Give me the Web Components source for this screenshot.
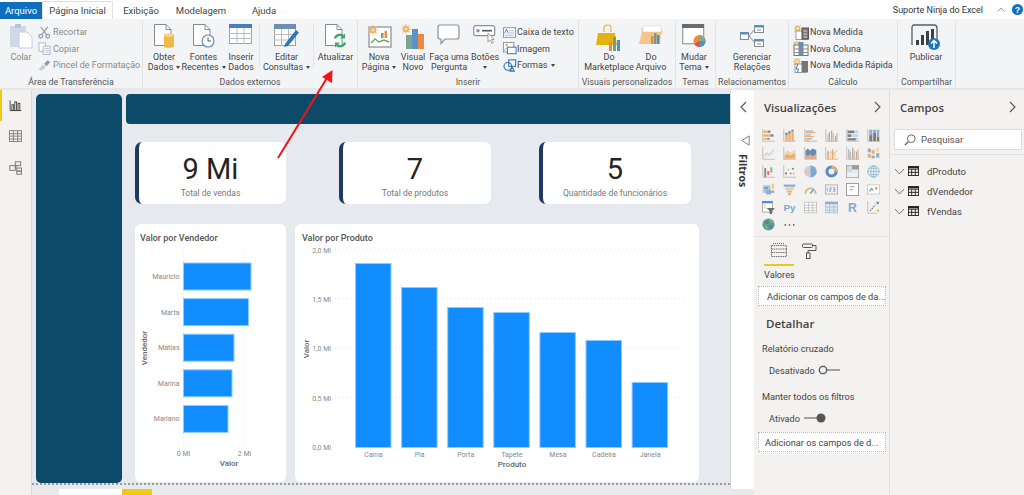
<!DOCTYPE html>
<html>
<head>
<meta charset="utf-8">
<style>
  html, body { margin: 0; height: 495px; overflow: hidden; background: #fff; font-family: Roboto, "Liberation Sans", sans-serif; }
</style>
</head>
<body>
<pbi-app></pbi-app>

<script>
// icon strings, keyed by name
const doc = 'M1.5 .5H13L18 5.5V21.5H1.5Z';
const fold = '<path d="M13 .5V5.5H18" fill="none" stroke="#8a8a8a"/>';
const sun = (x, y) => `<g transform="translate(${x} ${y})" stroke="#f0c48a" stroke-width="1.2"><path d="M-5 0H5M0-5V5M-3.5-3.5L3.5 3.5M-3.5 3.5L3.5-3.5"/><circle r="2.4" fill="#f5d9a8" stroke="#e3a860"/></g>`;
const ICONS = {
  colar: `<svg width="23" height="25" viewBox="0 0 23 25"><rect x="0" y="2" width="16" height="21" fill="#cfd9e8"/><rect x="5" y="0" width="6" height="4" fill="#b9c5d6"/><path d="M9 8H17L22 13V24H9Z" fill="#fff" stroke="#bcd0e6"/></svg>`,
  recortar: `<svg width="13" height="13" viewBox="0 0 14 14" fill="none" stroke="#8d9db0" stroke-width="1.3"><circle cx="3" cy="11" r="2"/><circle cx="10.5" cy="11" r="2"/><path d="M4 9.5L10.5 1M9.5 9.5L3 1"/></svg>`,
  copiar: `<svg width="13" height="13" viewBox="0 0 14 14" fill="#fff" stroke="#aab6c4"><rect x="1" y="1" width="7" height="9"/><rect x="5.5" y="4.5" width="7.5" height="9"/><path d="M7 7H12M7 9H12M7 11H12" stroke-width=".8"/></svg>`,
  pincel: `<svg width="13" height="12" viewBox="0 0 15 13"><path d="M1 11L6 6L9 9L5 12.5H2Z" fill="#c5ccd6"/><path d="M7 5L11 1L14 3L10 8Z" fill="#8a97a8"/></svg>`,
  obter: `<svg width="22" height="25" viewBox="0 0 22 25"><path d="${doc}" fill="#fff" stroke="#8a8a8a"/>${fold}<path d="M11 11V23C11 24 21 24 21 23V11Z" fill="#eeb84a"/><ellipse cx="16" cy="11" rx="5" ry="1.8" fill="#f5d58e"/></svg>`,
  fontes: `<svg width="24" height="25" viewBox="0 0 24 25"><path d="${doc}" fill="#fff" stroke="#8a8a8a"/>${fold}<circle cx="16" cy="17" r="6" fill="#fff" stroke="#5b8fc4" stroke-width="1.2"/><path d="M16 13.5V17H19" fill="none" stroke="#555"/></svg>`,
  tabela: `<svg width="24" height="21" viewBox="0 0 24 21"><rect x=".5" y=".5" width="22" height="19" fill="#fff" stroke="#9aa0a6"/><rect x="0" y="0" width="23" height="4" fill="#4a7ebb"/><path d="M8 4V20M15 4V20M0 9.5H23M0 14.5H23" stroke="#b8bcc0"/></svg>`,
  editar: `<svg width="26" height="24" viewBox="0 0 26 24"><rect x=".5" y="1.5" width="21" height="20" fill="#fff" stroke="#9aa0a6"/><rect x="0" y="0" width="22" height="5" fill="#6d8fb2"/><path d="M7.5 5V22M14.5 5V22M0 10.5H22M0 16H22" stroke="#b8bcc0"/><path d="M11 20L22 6L25 8.5L14 22L10 23Z" fill="#2f75bb"/></svg>`,
  atualizar: `<svg width="24" height="25" viewBox="0 0 24 25"><path d="${doc}" fill="#fff" stroke="#8a8a8a"/>${fold}<path d="M11 14.5A5 5 0 0 1 20 13M21 18.5A5 5 0 0 1 12 20" fill="none" stroke="#3fa56e" stroke-width="2.4"/><path d="M21 9.5V14.5H16ZM11 23.5V18.5H16Z" fill="#3fa56e"/></svg>`,
  pagina: `<svg width="25" height="24" viewBox="0 0 25 24"><rect x="2" y="3" width="22" height="20" fill="#fff" stroke="#9a9a9a" stroke-width="1.4"/><rect x="14" y="9" width="2.5" height="5" fill="#6ea36f"/><rect x="17.5" y="7" width="2.5" height="7" fill="#e8923f"/><path d="M4 19L8 15L12 18L17 16L22 18" fill="none" stroke="#6ea36f" stroke-width="1.4"/>${sun(6, 6)}</svg>`,
  visual: `<svg width="25" height="26" viewBox="0 0 25 26"><rect x="5" y="11" width="6" height="14" fill="#7ca58f"/><rect x="11" y="5" width="6" height="20" fill="#5d92c6"/><rect x="17" y="10" width="6" height="15" fill="#ea8a3e"/>${sun(5, 5)}</svg>`,
  pergunta: `<svg width="24" height="21" viewBox="0 0 24 21"><path d="M3 1H20Q22 1 22 3V13Q22 15 20 15H8L4 19.5V15H3Q1 15 1 13V3Q1 1 3 1Z" fill="#fff" stroke="#8e8e8e" stroke-width="1.2"/></svg>`,
  botoes: `<svg width="24" height="20" viewBox="0 0 24 20"><rect x=".7" y="1.7" width="21" height="10" rx="2" fill="#fff" stroke="#8e8e8e" stroke-width="1.2"/><circle cx="5" cy="6.7" r="1.7" fill="#5b9bd5"/><path d="M9 6.7H19" stroke="#555" stroke-width="1.6"/><path d="M15 9L15 18L17 16L19 19.5L20.5 18.5L18.5 15.5H21Z" fill="#fff" stroke="#888" stroke-width=".8"/></svg>`,
  caixa: `<svg width="13" height="11" viewBox="0 0 15 12"><rect x=".5" y=".5" width="14" height="11" fill="#fff" stroke="#7a8a9a"/><path d="M2 7L4 2L6 7" fill="none" stroke="#3d7cc0"/><path d="M7 4H13M7 6.5H13M2 9H13" stroke="#a5b5c5"/></svg>`,
  imagem: `<svg width="14" height="13" viewBox="0 0 16 15"><rect x=".5" y=".5" width="12" height="11" fill="#fff" stroke="#8a8a8a"/><circle cx="4" cy="3.5" r="1.4" fill="#e8a35a"/><rect x="5" y="6" width="10" height="7.5" fill="#fff" stroke="#3d7cc0" stroke-width="1.2"/><path d="M1 10L4 7L6 9" fill="none" stroke="#5b9bd5"/></svg>`,
  formas: `<svg width="14" height="13" viewBox="0 0 16 15" fill="none" stroke="#2f6fb0" stroke-width="1.2"><circle cx="5.5" cy="8.5" r="4.5"/><rect x="6.5" y="1" width="8" height="7.5"/><path d="M8 14L10.5 9.5L13 14Z"/></svg>`,
  marketplace: `<svg width="26" height="28" viewBox="0 0 26 28"><path d="M8 8V4Q8 1 12 1Q15 1 15 4V8" fill="none" stroke="#e0b93a" stroke-width="1.2"/><path d="M2 8H19L21 20H0Z" fill="#e3b40e" transform="translate(0 1)"/><rect x="13" y="18" width="3" height="9" fill="#e98a3c"/><rect x="17" y="13" width="3" height="14" fill="#6fa08a"/><rect x="21" y="16" width="3" height="11" fill="#4f8fca"/></svg>`,
  arquivo: `<svg width="24" height="24" viewBox="0 0 24 24"><path d="M3 4H9L11 6H23V10H3Z" fill="#f4d6a2" stroke="#e9c181" stroke-width=".6"/><path d="M4 2H22V8H4Z" fill="#fff" stroke="#d8d8d8" stroke-width=".6"/><path d="M0 20L3 8H22L21 20Z" fill="#f2c68a"/><rect x="12" y="12" width="2.5" height="8" fill="#e98a3c"/><rect x="15" y="9" width="2.5" height="11" fill="#6fa08a"/><rect x="18" y="11" width="2.5" height="9" fill="#4f8fca"/></svg>`,
  tema: `<svg width="24" height="25" viewBox="0 0 24 25"><rect x=".7" y=".7" width="21" height="19" fill="#fff" stroke="#9a9a9a" stroke-width="1.2"/><rect x="0" y="0" width="22" height="4" fill="#6b6b6b"/><circle cx="17.5" cy="17" r="6" fill="#e98a3c"/><path d="M17.5 17V11A6 6 0 0 1 23.5 17Z" fill="#7fae8c"/><path d="M17.5 17H23.5A6 6 0 0 1 17.5 23Z" fill="#4f8fca"/><path d="M17.5 17V23A6 6 0 0 1 12.5 20Z" fill="#d94f3d"/></svg>`,
  relacoes: `<svg width="24" height="24" viewBox="0 0 24 24"><path d="M9 12L15 5M9 12L15 19" stroke="#8a8a8a" fill="none"/><rect x=".5" y="8.5" width="8" height="7" fill="#fff" stroke="#8a8a8a"/><rect x="0" y="8" width="9" height="2.5" fill="#5b8fc4"/><rect x="14.5" y="1.5" width="9" height="7" fill="#fff" stroke="#8a8a8a"/><rect x="14" y="1" width="10" height="2.5" fill="#5b8fc4"/><rect x="14.5" y="15.5" width="9" height="7" fill="#fff" stroke="#8a8a8a"/><rect x="14" y="15" width="10" height="2.5" fill="#5b8fc4"/><path d="M17 6H21M17 20H21" stroke="#8a8a8a"/></svg>`,
  medida: `<svg width="15" height="15" viewBox="0 0 15 15">${sun(3.5, 3.5).replace('stroke-width="1.2"', 'stroke-width=".9"')}<rect x="2" y="6" width="12" height="8.5" fill="#fff" stroke="#999"/><rect x="8" y="3" width="6.5" height="11" fill="#777" stroke="#555"/><path d="M9.5 6H13M9.5 9H13M9.5 12H13" stroke="#ddd"/></svg>`,
  coluna: `<svg width="16" height="15" viewBox="0 0 16 15">${sun(3.5, 3.5).replace('stroke-width="1.2"', 'stroke-width=".9"')}<rect x="1" y="4" width="14" height="10.5" fill="#fff" stroke="#777"/><rect x="5.5" y="1" width="5" height="13.5" fill="#6a8fb5"/><path d="M1 8H15M1 11.5H15" stroke="#888"/></svg>`,
  rapida: `<svg width="16" height="15" viewBox="0 0 16 15">${sun(4, 3.5).replace('stroke-width="1.2"', 'stroke-width=".9"')}<rect x="2" y="6" width="12" height="8.5" fill="#fff" stroke="#999"/><rect x="8.5" y="3" width="6.5" height="11" fill="#777"/><path d="M5 6L3 11H5.5L4.5 14.5" fill="none" stroke="#3d7cc0"/></svg>`,
  publicar: `<svg width="32" height="28" viewBox="0 0 32 28"><path d="M4 1H24Q27 1 27 4V16M2 21V4Q2 1 4 1" fill="none" stroke="#5c5c5c" stroke-width="1.3"/><rect x="6" y="16" width="3" height="5" fill="#3f3f3f"/><rect x="11" y="11" width="3" height="10" fill="#3f3f3f"/><rect x="16" y="7" width="3" height="14" fill="#3f3f3f"/><rect x="21" y="5" width="3" height="12" fill="#3f3f3f"/><circle cx="24" cy="20" r="6" fill="#1f75c4"/><path d="M24 24V17M21 19.5L24 16.5L27 19.5" fill="none" stroke="#fff" stroke-width="1.5"/></svg>`,
  relatorio: `<svg width="13" height="13" viewBox="0 0 18 18" fill="none" stroke="#444" stroke-width="1.3"><path d="M1.5 2V16H17" /><rect x="4" y="8" width="2.5" height="8"/><rect x="8" y="4" width="2.5" height="12"/><rect x="12.5" y="6" width="2.5" height="10"/></svg>`,
  dados: `<svg width="13" height="13" viewBox="0 0 18 17" fill="#fff" stroke="#777" stroke-width="1.2"><rect x=".5" y=".5" width="17" height="15" fill="#f3f2f1"/><path d="M.5 4.5H17.5M.5 8H17.5M.5 12H17.5M6 .5V15.5M12 .5V15.5" fill="none"/></svg>`,
  modelo: `<svg width="14" height="14" viewBox="0 0 18 18" fill="none" stroke="#777" stroke-width="1.2"><rect x="8" y="1" width="7" height="5"/><rect x="1" y="6" width="7" height="6"/><rect x="10" y="9" width="6" height="4"/><rect x="10" y="13" width="6" height="4"/><path d="M8 9L10 5M8 9H10"/></svg>`,
  campos: `<svg width="16" height="15" viewBox="0 0 16 15" fill="none" stroke="#6a6a6a" stroke-dasharray="1.4 .8"><rect x=".5" y="2.5" width="15" height="11"/><path d="M.5 6H15.5M.5 9.5H15.5"/><path d="M2 .5H14" stroke-dasharray="1 1"/></svg>`,
  rolo: `<svg width="15" height="16" viewBox="0 0 15 16" fill="#f3f2f1" stroke="#555"><rect x=".5" y="1" width="10" height="3.5" rx="1"/><path d="M10.5 2.5H14V7.5H6V10" fill="none"/><rect x="4.5" y="10" width="3.5" height="5.5"/></svg>`,
  funil: `<svg width="10" height="11" viewBox="0 0 12 13" fill="none" stroke="#666"><path d="M11 1V12L3 7Q1 6.5 3 6Z"/></svg>`,
  lupa: `<svg width="12" height="12" viewBox="0 0 14 14" fill="none" stroke="#555"><circle cx="8.5" cy="5.5" r="4.5"/><path d="M5 9L1 13" stroke-width="1.4"/></svg>`,
  tabelinha: `<svg width="11" height="10" viewBox="0 0 12 11" fill="none" stroke="#222"><rect x=".5" y=".5" width="11" height="10"/><path d="M.5 3.5H11.5M.5 7H11.5M4 3.5V10.5M8 3.5V10.5"/><path d="M0 1.5H12" stroke-width="2"/></svg>`,
  esq: `<svg width="7" height="12" viewBox="0 0 7 12" fill="none" stroke="#555" stroke-width="1.1"><path d="M6 1L1 6L6 11"/></svg>`,
  dir: `<svg width="7" height="12" viewBox="0 0 7 12" fill="none" stroke="#555" stroke-width="1.1"><path d="M1 1L6 6L1 11"/></svg>`,
  baixo: `<svg width="11" height="7" viewBox="0 0 11 7" fill="none" stroke="#777"><path d="M1 1L5.5 6L10 1"/></svg>`
};

// viz pane icons, all drawn on 17x17
const O = '#e9a35c', B = '#7fa3c9', G = '#6b6b6b', L = '#b9cfe5', P = '#f3d3ab', A = '#a8a8a8';
const r = (x, y, w, h, c) => `<rect x="${x}" y="${y}" width="${w}" height="${h}" fill="${c}"/>`;
const axis = `<path d="M1 0V16H17" fill="none" stroke="${A}"/>`;
const VIZ = [
  axis + r(2,2,6,3,O)+r(8,2,3,3,G)+r(2,7,9,3,O)+r(11,7,4,3,G)+r(2,12,5,2,O)+r(7,12,3,2,G),
  axis + r(3,8,3,8,O)+r(3,5,3,3,G)+r(7,6,3,10,O)+r(7,3,3,3,G)+r(11,3,3,13,O)+r(11,1,3,2,G),
  axis + r(2,2,10,1.5,B)+r(2,4,13,1.5,O)+r(2,7,7,1.5,B)+r(2,9,11,1.5,O)+r(2,12,9,1.5,B)+r(2,14,5,1.5,O),
  axis + r(3,7,1.5,9,O)+r(5,4,1.5,12,B)+r(8,2,1.5,14,B)+r(10,6,1.5,10,O)+r(13,9,1.5,7,B)+r(15,5,1.5,11,O),
  axis + r(2,2,9,3.5,G)+r(11,2,5,3.5,L)+r(2,7,5,3.5,G)+r(7,7,9,3.5,L)+r(2,12,11,3,G)+r(13,12,3,3,L),
  axis + r(3,1,4,7,B)+r(3,8,4,8,G)+r(8,1,4,4,B)+r(8,5,4,11,G)+r(13,1,3,9,B)+r(13,10,3,6,G),
  axis + `<path d="M2 12L6 8L9 10L16 3" fill="none" stroke="${B}"/><path d="M2 14L6 11L10 12L16 7" fill="none" stroke="${P}"/>`,
  axis + `<path d="M2 8L6 4L10 7L16 3V15H2Z" fill="${P}"/><path d="M2 11L6 9L10 11L16 8V15H2Z" fill="${O}"/>`,
  axis + `<path d="M2 5L5 2L8 5L11 2L16 4V15H2Z" fill="#4e78a5"/><path d="M2 9L5 12L8 9L11 12L16 9V15H2Z" fill="${O}"/>`,
  axis + r(3,5,2,11,O)+r(6,8,2,8,P)+r(9,3,2,13,O)+r(12,7,2,9,P)+`<path d="M2 10L7 6L11 9L16 4" fill="none" stroke="#c96" />`,
  axis + r(3,3,1.5,13,B)+r(5,6,1.5,10,O)+r(8,1,1.5,15,B)+r(10,4,1.5,12,O)+r(13,6,1.5,10,B)+r(15,3,1.5,13,O),
  r(1,2,4,5,B)+r(1,9,4,5,O)+r(6,4,4,5,O)+r(6,11,4,4,B)+r(12,1,4,5,P)+r(12,8,4,6,B),
  axis + r(3,4,2.5,12,'#7a7a7a')+r(7,8,2.5,5,'#d9534f')+r(11,3,2.5,7,'#7ca58f'),
  axis + `<circle cx="4" cy="11" r="1.4" fill="#4e78a5"/><circle cx="7" cy="6" r="1.2" fill="${O}"/><circle cx="10" cy="11" r="1.2" fill="#d9534f"/><circle cx="13" cy="5" r="1.3" fill="#4e78a5"/><circle cx="14" cy="11" r="1.1" fill="${O}"/>`,
  `<circle cx="8.5" cy="8.5" r="8" fill="${L}"/><path d="M8.5 .5A8 8 0 0 1 8.5 16.5Z" fill="#6f9ccb"/><path d="M8.5 8.5L1 6A8 8 0 0 0 3 14Z" fill="#f0b9a0"/>`,
  `<circle cx="8.5" cy="8.5" r="6" fill="none" stroke="#3f7cbf" stroke-width="4"/><path d="M8.5 2.5A6 6 0 0 1 14.5 8.5" fill="none" stroke="${O}" stroke-width="4"/>`,
  `<rect x=".5" y=".5" width="16" height="16" fill="#fff" stroke="#777"/>` + r(1,1,7,9,'#c9d5e0')+r(8,1,8,5,'#8a8a8a')+r(8,7,8,4,'#dfe6ee')+r(1,11,15,5,'#eceff2'),
  `<circle cx="8.5" cy="8.5" r="7.5" fill="#e5f1f1" stroke="#6fa3c7"/><path d="M1 8.5H16M8.5 1V16M3 4.5H14M3 12.5H14" stroke="#6fa3c7" stroke-width=".8"/><ellipse cx="8.5" cy="8.5" rx="3.5" ry="7.5" fill="none" stroke="#6fa3c7" stroke-width=".8"/>`,
  r(1,3,10,10,'#a9bfd6')+r(3,5,5,3,'#6f8fb0')+r(5,9,7,6,B)+r(13,1,2.5,7,'#e9c26a')+r(11,10,5,3,'#7fa3c9'),
  r(1,2,15,3,B)+r(3,6,11,3,'#f0c08a')+r(5,10,7,2.5,O)+r(6.5,13.5,4,2.5,'#d9a060'),
  `<path d="M2 14A6.5 6.5 0 0 1 9 7" fill="none" stroke="#e8b45e" stroke-width="2.6"/><path d="M9 7A6.5 6.5 0 0 1 15 14" fill="none" stroke="#9db7d1" stroke-width="2.6"/><path d="M8 14L12 9" stroke="#3f8f5f" stroke-width="1.6"/>`,
  `<rect x=".5" y="2.5" width="16" height="12" fill="#eef1f4" stroke="#999"/><path d="M3 6V11M6 6H8V8.5H6V11H8M10.5 6H13V11H10.5M10.5 8.5H13" fill="none" stroke="#7a8ea3"/>`,
  `<rect x=".5" y=".5" width="16" height="16" fill="#fff" stroke="#8a8a8a" stroke-width="1.4"/>` + r(5,4,6,1.5,B)+r(5,8,4,1.5,B),
  `<rect x=".5" y="2.5" width="16" height="12" fill="#fff" stroke="#bbb"/><path d="M3 11L6 7L8 10" fill="none" stroke="#4f9a6c" stroke-width="1.4"/><path d="M10 6H14L12 9Z" fill="#d94f3d"/>`,
  `<rect x=".5" y=".5" width="13" height="14" fill="#fff" stroke="#8a8a8a"/>` + r(0,0,14,3,'#3f7cbf')+r(3,5,1.5,1.5,O)+r(3,8,1.5,1.5,O)+`<path d="M6 9H17L13 13V17H10V13Z" fill="#555"/>`,
  `<text x="8.5" y="13.5" font-size="13" font-weight="700" text-anchor="middle" fill="#6f9ccb" font-family="Liberation Sans">Py</text>`,
  `<rect x=".5" y="1.5" width="16" height="14" fill="#fff" stroke="#b2b2b2"/><path d="M.5 5.5H16.5M.5 9H16.5M.5 12.5H16.5M6 1.5V15.5M11.5 1.5V15.5" stroke="#b2b2b2"/>`,
  `<rect x=".5" y="1.5" width="16" height="14" fill="#dfe7ef" stroke="#9fb2c6"/>` + r(0,1,17,3,'#7fa3c9') + `<path d="M.5 8H16.5M.5 12H16.5M6 4V15.5M11.5 4V15.5" stroke="#9fb2c6"/>`,
  `<text x="8.5" y="14.5" font-size="16" font-weight="700" text-anchor="middle" fill="#6f9ccb" font-family="Liberation Sans">R</text>`,
  `<path d="M1 0V16H13" fill="none" stroke="${A}"/><path d="M4 13L11 5" stroke="#555" stroke-dasharray="2 1.3" stroke-width="1.4"/><circle cx="14" cy="2.5" r="1.8" fill="#4a86c5"/><circle cx="14.5" cy="12.5" r="2" fill="#eec15e"/>`,
  `<circle cx="8.5" cy="8.5" r="8" fill="#4f8f7c"/><path d="M3 5L8 3L10 7L6 8ZM9 10L14 8L13 13L9 14Z" fill="#2f6fb0"/><path d="M5 11L7 14M11 3L14 6" stroke="#9ac27a" stroke-width="1.3"/>`,
  `<circle cx="3" cy="9" r="1.1" fill="#444"/><circle cx="8.5" cy="9" r="1.1" fill="#444"/><circle cx="14" cy="9" r="1.1" fill="#444"/>`
];

class RbTabs extends HTMLElement {
  constructor() {
    super();
    this.attachShadow({mode: 'open'});
    this.shadowRoot.innerHTML = `
    <style>
      :host { display: flex; height: 19px; background: #fff; font-size: 9.5px; color: #444; align-items: flex-end; }
      span { display: flex; align-items: center; justify-content: center; height: 17px; }
      .file { width: 42px; background: #106ebe; color: #fff; }
      .on { width: 71px; height: 18px; box-sizing: border-box; background: #fdfdfd; border: 1px solid #e1e1e1; border-bottom: 0; }
      .t1 { width: 56px; } .t2 { width: 64px; } .t3 { width: 62px; }
      .right { margin-left: auto; padding-right: 1px; display: flex; align-items: center; height: 19px; }
      .help { width: 11px; height: 11px; border-radius: 50%; background: #106ebe; color: #fff; font: 700 9px "Liberation Sans", sans-serif; margin-left: 7px; }
      .who { font-size: 9px; color: #333; margin-right: 14px; }
    </style>
    <span class="file">Arquivo</span><span class="on">Página Inicial</span>
    <span class="t1">Exibição</span><span class="t2">Modelagem</span><span class="t3">Ajuda</span>
    <div class="right"><span class="who">Suporte Ninja do Excel</span>
      <svg width="8" height="5" viewBox="0 0 8 5" fill="none" stroke="#999"><path d="M.5 4.5L4 1L7.5 4.5"/></svg>
      <span class="help">?</span></div>`;
  }
}

class RbGroup extends HTMLElement {
  constructor() {
    super();
    this.attachShadow({mode: 'open'});
    this.shadowRoot.innerHTML = `
    <style>
      :host { display: flex; flex-direction: column; box-sizing: border-box; height: 67px; margin-top: 2px; border-right: 1px solid #e1e3e6; }
      .body { display: flex; height: 55px; justify-content: var(--just, flex-start); }
      .label { height: 12px; line-height: 13px; text-align: center; font-size: 8.8px; color: #555; white-space: nowrap; }
    </style>
    <div class="body"><slot></slot></div>
    <div class="label"></div>`;
  }
  connectedCallback() {
    this.shadowRoot.querySelector('.label').textContent = this.getAttribute('label');
  }
}

class RbButton extends HTMLElement {
  constructor() {
    super();
    this.attachShadow({mode: 'open'});
    this.shadowRoot.innerHTML = `
    <style>
      :host { display: flex; flex-direction: column; align-items: center; flex: none; font-size: 9px; line-height: 10px; color: #444; }
      .ic { height: 31px; padding-top: 3px; box-sizing: border-box; display: flex; align-items: flex-start; justify-content: center; }
      .tx { text-align: center; white-space: pre; }
      :host([off]) { color: #888; }
    </style>
    <div class="ic"></div><div class="tx"><slot></slot></div>`;
  }
  connectedCallback() {
    this.shadowRoot.querySelector('.ic').innerHTML = ICONS[this.getAttribute('icon')];
  }
}

class RbSmall extends HTMLElement {
  constructor() {
    super();
    this.attachShadow({mode: 'open'});
    this.shadowRoot.innerHTML = `
    <style>
      :host { display: flex; align-items: center; gap: var(--gap, 3px); height: 16.5px; font-size: 9px; color: #444; white-space: nowrap; }
      :host([off]) { color: #8a8a8a; }
      .ic { display: flex; width: var(--ic, 16px); justify-content: center; }
    </style>
    <div class="ic"></div><slot></slot>`;
  }
  connectedCallback() {
    this.shadowRoot.querySelector('.ic').innerHTML = ICONS[this.getAttribute('icon')];
  }
}

class PbiRibbon extends HTMLElement {
  constructor() {
    super();
    const tri = 'display:inline-block;border:2.5px solid transparent;border-top:3px solid #444;border-bottom:0;';
    const caret = `<i style="${tri}margin-left:3px;vertical-align:1px"></i>`;
    this.attachShadow({mode: 'open'});
    this.shadowRoot.innerHTML = `
    <style>
      :host { display: flex; height: 71px; box-sizing: border-box; background: #f3f4f6; border-bottom: 2px solid #e6e6e6; }
      .col { display: flex; flex-direction: column; padding-top: 3px; }
      .sep { width: 1px; height: 44px; margin-top: 3px; background: #e1e3e6; flex: none; }
    </style>
    <rb-group label="Área de Transferência" style="width:143px">
      <rb-button off icon="colar" style="width:36px;margin-left:3px">Colar</rb-button>
      <div class="col" style="margin-left:-1px;--ic:13px;--gap:2px">
        <rb-small off icon="recortar">Recortar</rb-small>
        <rb-small off icon="copiar">Copiar</rb-small>
        <rb-small off icon="pincel">Pincel de Formatação</rb-small>
      </div>
    </rb-group>
    <rb-group label="Dados externos" style="width:215px">
      <rb-button icon="obter" style="width:40px;margin-left:1px">Obter\nDados${caret}</rb-button>
      <rb-button icon="fontes" style="width:39px">Fontes\nRecentes${caret}</rb-button>
      <rb-button icon="tabela" style="width:36px">Inserir\nDados</rb-button>
      <div class="sep"></div>
      <rb-button icon="editar" style="width:53px">Editar\nConsultas${caret}</rb-button>
      <div class="sep"></div>
      <rb-button icon="atualizar" style="width:43px">Atualizar</rb-button>
    </rb-group>
    <rb-group label="Inserir" style="width:221px">
      <rb-button icon="pagina" style="width:38px;margin-left:2px">Nova\nPágina${caret}</rb-button>
      <rb-button icon="visual" style="width:30px">Visual\nNovo</rb-button>
      <rb-button icon="pergunta" style="width:42px">Faça uma\nPergunta</rb-button>
      <rb-button icon="botoes" style="width:30px">Botões\n<i style="${tri}vertical-align:1px"></i></rb-button>
      <div class="col" style="margin-left:2px;--ic:15px;--gap:0">
        <rb-small icon="caixa">Caixa de texto</rb-small>
        <rb-small icon="imagem">Imagem</rb-small>
        <rb-small icon="formas">Formas${caret}</rb-small>
      </div>
    </rb-group>
    <rb-group label="Visuais personalizados" style="width:97px">
      <rb-button icon="marketplace" style="width:52px;margin-left:4px">Do\nMarketplace</rb-button>
      <rb-button icon="arquivo" style="width:32px">Do\nArquivo</rb-button>
    </rb-group>
    <rb-group label="Temas" style="width:40px">
      <rb-button icon="tema" style="width:36px">Mudar\nTema${caret}</rb-button>
    </rb-group>
    <rb-group label="Relacionamentos" style="width:73px">
      <rb-button icon="relacoes" style="width:72px">Gerenciar\nRelações</rb-button>
    </rb-group>
    <rb-group label="Cálculo" style="width:109px">
      <div class="col" style="margin-left:4px;--gap:1px">
        <rb-small icon="medida">Nova Medida</rb-small>
        <rb-small icon="coluna">Nova Coluna</rb-small>
        <rb-small icon="rapida">Nova Medida Rápida</rb-small>
      </div>
    </rb-group>
    <rb-group label="Compartilhar" style="width:58px">
      <rb-button icon="publicar" style="width:56px">Publicar</rb-button>
    </rb-group>`;
  }
}

class PbiRail extends HTMLElement {
  constructor() {
    super();
    this.attachShadow({mode: 'open'});
    this.shadowRoot.innerHTML = `
    <style>
      :host { display: flex; flex-direction: column; box-sizing: border-box; width: 32px; height: 405px; background: #f3f2f1; border-right: 1px solid #d9d9d9; }
      div { height: 31px; display: flex; align-items: center; justify-content: center; }
      .on { box-shadow: inset 2px 0 0 #f2c811; }
    </style>
    <div class="on">${ICONS.relatorio}</div><div>${ICONS.dados}</div><div>${ICONS.modelo}</div>`;
  }
}

class KpiCard extends HTMLElement {
  constructor() {
    super();
    this.attachShadow({mode: 'open'});
    this.shadowRoot.innerHTML = `
    <style>
      :host { display: flex; flex-direction: column; align-items: center; box-sizing: border-box; height: 62px; padding-right: 4px; background: #fff; border-radius: 7px; border-left: 4px solid #1f3864; overflow: hidden; }
      .v { font-size: 29px; line-height: 35px; margin-top: 10px; color: #252423; }
      .l { font-size: 8.5px; line-height: 12px; color: #777; white-space: nowrap; }
    </style>
    <div class="v"></div><div class="l"></div>`;
  }
  connectedCallback() {
    this.shadowRoot.querySelector('.v').textContent = this.getAttribute('value');
    this.shadowRoot.querySelector('.l').textContent = this.getAttribute('label');
  }
}

// draws the chart from plot numbers given in the card's own pixels
class BarChart extends HTMLElement {
  constructor() {
    super();
    this.attachShadow({mode: 'open'});
    this.shadowRoot.innerHTML = `
    <style>
      :host { display: block; flex: none; height: 258px; background: #fff; border-radius: 6px; overflow: hidden; }
      svg { display: block; }
      .t { font-size: 9px; font-weight: 500; fill: #555; }
      .a { font-size: 8px; font-weight: 500; fill: #666; }
      .k { font-size: 7px; fill: #888; }
      .b { fill: #118dff; stroke: #8fcaff; }
      .g { stroke: #e4e4e4; stroke-dasharray: 1 3; }
    </style>`;
  }
  connectedCallback() {
    const horizontal = this.hasAttribute('horizontal');
    const data = JSON.parse(this.getAttribute('data'));
    const w = this.getBoundingClientRect().width;
    let s = `<svg width="${w}" height="258"><text class="t" x="${horizontal ? 5 : 7}" y="17">${this.getAttribute('title')}</text>`;
    if (horizontal) {
      for (const x of [48.5, 109.5]) s += `<line class="g" x1="${x}" x2="${x}" y1="25" y2="222"/>`;
      data.forEach((d, i) => {
        const y = 39 + i * 35.6;
        s += `<rect class="b" x="48.5" y="${y}" width="${d[1]}" height="27"/>`;
        s += `<text class="k" x="44.5" y="${y + 16}" text-anchor="end">${d[0]}</text>`;
      });
      s += `<text class="k" x="48.5" y="232" text-anchor="middle">0 Mi</text><text class="k" x="109.5" y="232" text-anchor="middle">2 Mi</text>`;
      s += `<text class="a" x="94" y="242" text-anchor="middle">Valor</text>`;
      s += `<text class="a" transform="translate(12 124) rotate(-90)" text-anchor="middle">Vendedor</text>`;
    } else {
      ['2,0 Mi', '1,5 Mi', '1,0 Mi', '0,5 Mi', '0,0 Mi'].forEach((t, i) => {
        const y = 25.5 + i * 49.4;
        s += `<text class="k" x="36" y="${y + 3}" text-anchor="end">${t}</text>`;
        if (i < 4) s += `<line class="g" x1="40" x2="390" y1="${y}" y2="${y}"/>`;
      });
      data.forEach((d, i) => {
        const x = 60.5 + i * 46.1;
        s += `<rect class="b" x="${x}" y="${d[1]}" width="35.5" height="${223.5 - d[1]}"/>`;
        s += `<text class="k" x="${x + 18}" y="233" text-anchor="middle">${d[0]}</text>`;
      });
      s += `<text class="a" x="217" y="243" text-anchor="middle">Produto</text>`;
      s += `<text class="a" transform="translate(14 125) rotate(-90)" text-anchor="middle">Valor</text>`;
    }
    this.shadowRoot.innerHTML += s + '</svg>';
  }
}

class PbiCanvas extends HTMLElement {
  constructor() {
    super();
    this.attachShadow({mode: 'open'});
    this.shadowRoot.innerHTML = `
    <style>
      :host { display: block; width: 698px; height: 399px; background: #e6e9ed; overflow: hidden; }
      .page { display: flex; gap: 4px; height: 389px; padding: 4px 0 0 4px; box-sizing: content-box; border-bottom: 2px dotted #9a9a9a; }
      .nav { width: 86px; background: #0c4a6a; border-radius: 5px; flex: none; }
      .main { flex: 1; display: flex; flex-direction: column; }
      .head { height: 30px; background: #0c4a6a; border-radius: 4px 0 0 4px; }
      .cards { display: flex; margin: 18px 0 0 9px; }
      .charts { display: flex; gap: 9px; margin: 20px 0 0 9px; }
    </style>
    <div class="page">
      <div class="nav"></div>
      <div class="main">
        <div class="head"></div>
        <div class="cards">
          <kpi-card value="9 Mi" label="Total de vendas" style="width:151px"></kpi-card>
          <kpi-card value="7" label="Total de produtos" style="width:152px;margin-left:53px"></kpi-card>
          <kpi-card value="5" label="Quantidade de funcionários" style="width:152px;margin-left:48px"></kpi-card>
        </div>
        <div class="charts">
          <bar-chart horizontal title="Valor por Vendedor" style="width:151px"
            data='[["Maurício",67.5],["Marta",65],["Matias",50.5],["Marina",48.5],["Mariano",44.5]]'></bar-chart>
          <bar-chart title="Valor por Produto" style="width:404px"
            data='[["Cama",39.5],["Pia",63.5],["Porta",83.5],["Tapete",88.5],["Mesa",108.5],["Cadeira",116.5],["Janela",158.5]]'></bar-chart>
        </div>
      </div>
    </div>`;
  }
}

class PbiFilters extends HTMLElement {
  constructor() {
    super();
    this.attachShadow({mode: 'open'});
    this.shadowRoot.innerHTML = `
    <style>
      :host { display: flex; flex-direction: column; align-items: center; box-sizing: border-box; width: 24px; height: 399px; background: #fff; border-left: 1px solid #d6d6d6; padding: 11px 0 0 1px; }
      .f { margin-top: 18px; height: 11px; margin-left: 4px; }
      .t { writing-mode: vertical-rl; font: 700 10.5px "Open Sans", sans-serif; color: #333; margin-top: 12px; }
    </style>
    ${ICONS.esq}<div class="f">${ICONS.funil}</div><div class="t">Filtros</div>`;
  }
}

class WellBox extends HTMLElement {
  constructor() {
    super();
    this.attachShadow({mode: 'open'});
    this.shadowRoot.innerHTML = `
    <style>
      :host { display: flex; align-items: center; box-sizing: border-box; width: 128px; height: 20px; margin-left: 4px; padding-left: var(--pad, 8px); background: #fff; border: 1px dotted #bbb; font-size: 9.2px; color: #444; white-space: nowrap; }
    </style><slot></slot>`;
  }
}

class PaneHead extends HTMLElement {
  constructor() {
    super();
    this.attachShadow({mode: 'open'});
    this.shadowRoot.innerHTML = `
    <style>
      :host { display: flex; align-items: center; justify-content: space-between; height: 34px; padding: 0 8px 2px 10px; font: 600 11.3px "Open Sans", sans-serif; color: #444; }
    </style><slot></slot>${ICONS.dir}`;
  }
}

class VizPane extends HTMLElement {
  constructor() {
    super();
    const cells = VIZ.map(v => `<svg width="13" height="13" viewBox="0 0 17 17">${v}</svg>`).join('');
    this.attachShadow({mode: 'open'});
    this.shadowRoot.innerHTML = `
    <style>
      :host { display: block; box-sizing: border-box; width: 136px; height: 405px; background: #f3f2f1; border-right: 1px solid #e1dfdd; }
      .grid { display: grid; grid-template-columns: repeat(6, 21px); grid-auto-rows: 17.8px; justify-items: center; align-items: center; padding: 0 0 0 3.5px; margin-top: 1px; height: 108px; }
      .grid svg { opacity: .85; }
      .tabs { display: flex; border-top: 1px solid #e6e4e2; height: 27px; margin-top: 1px; padding: 6px 0 0 10px; box-sizing: border-box; }
      .tabs div { width: 30px; height: 20px; display: flex; justify-content: center; }
      .tabs .on { border-bottom: 2px solid #f2c811; height: 21px; margin-right: 8px; }
      .cap { font-size: 9.2px; color: #444; line-height: 12px; }
      .d { font: 600 11.5px "Open Sans", sans-serif; color: #444; padding-left: 12px; margin: 10px 0 12px; line-height: 15px; }
      .tg { display: flex; align-items: center; gap: 3px; font-size: 9.2px; color: #444; padding-left: 15px; height: 12px; margin: 9px 0 15px; }
    </style>
    <pane-head>Visualizações</pane-head>
    <div class="grid">${cells}</div>
    <div class="tabs"><div class="on">${ICONS.campos}</div><div style="justify-content:flex-start">${ICONS.rolo}</div></div>
    <div class="cap" style="margin:6px 0 5px 10px">Valores</div>
    <well-box>Adicionar os campos de da...</well-box>
    <div class="d">Detalhar</div>
    <div class="cap" style="padding-left:8px">Relatório cruzado</div>
    <div class="tg">Desativado <svg width="23" height="10" viewBox="0 0 23 10" fill="none" stroke="#555"><circle cx="5" cy="5" r="3.7" stroke-width="1.3"/><path d="M9 5H22"/></svg></div>
    <div class="cap" style="padding-left:8px">Manter todos os filtros</div>
    <div class="tg" style="margin-bottom:8px">Ativado <svg width="23" height="10" viewBox="0 0 23 10"><path d="M1 5H14" stroke="#555"/><circle cx="18" cy="5" r="4.5" fill="#555"/></svg></div>
    <well-box style="--pad:6px">Adicionar os campos de d...</well-box>`;
  }
}

class FieldRow extends HTMLElement {
  constructor() {
    super();
    this.attachShadow({mode: 'open'});
    this.shadowRoot.innerHTML = `
    <style>
      :host { display: flex; align-items: center; height: 20px; padding-left: 4px; gap: 3px; font-size: 9.5px; color: #444; }
      span { margin-left: 5px; }
    </style>${ICONS.baixo}${ICONS.tabelinha}<span><slot></slot></span>`;
  }
}

class FieldsPane extends HTMLElement {
  constructor() {
    super();
    this.attachShadow({mode: 'open'});
    this.shadowRoot.innerHTML = `
    <style>
      :host { display: block; width: 134px; height: 405px; background: #f3f2f1; }
      .s { display: flex; align-items: center; gap: 5px; box-sizing: border-box; width: 128px; height: 21px; margin: 3px 0 0 4px; padding-left: 9px; background: #fff; border: 1px solid #ddd; font-size: 9.5px; color: #555; }
      .list { border-top: 1px solid #e3e1df; margin-top: 4px; padding-top: 6px; }
    </style>
    <pane-head>Campos</pane-head>
    <div class="s">${ICONS.lupa}Pesquisar</div>
    <div class="list">
      <field-row>dProduto</field-row>
      <field-row>dVendedor</field-row>
      <field-row>fVendas</field-row>
    </div>`;
  }
}

class PbiApp extends HTMLElement {
  constructor() {
    super();
    this.attachShadow({mode: 'open'});
    this.shadowRoot.innerHTML = `
    <style>
      :host { display: block; position: relative; width: 1024px; height: 495px; overflow: hidden; }
      .work { display: flex; height: 405px; }
      .rep { width: 722px; }
      .up { display: flex; }
      .strip { display: flex; height: 6px; background: #e9e9e9; }
      .strip i { display: block; height: 6px; }
      svg.arrow { position: absolute; left: 0; top: 0; pointer-events: none; }
    </style>
    <rb-tabs></rb-tabs>
    <pbi-ribbon></pbi-ribbon>
    <div class="work">
      <pbi-rail></pbi-rail>
      <div class="rep">
        <div class="up"><pbi-canvas></pbi-canvas><pbi-filters></pbi-filters></div>
        <div class="strip"><i style="width:27px"></i><i style="width:63px;background:#fff"></i><i style="width:30px;background:#f2c811"></i></div>
      </div>
      <viz-pane></viz-pane>
      <fields-pane></fields-pane>
    </div>
    <svg class="arrow" width="1024" height="495"><path d="M278 158L327 78" stroke="#f01414" stroke-width="2"/><path d="M332.5 70L332 83L322 77Z" fill="#f01414"/></svg>`;
  }
}

customElements.define('rb-tabs', RbTabs);
customElements.define('rb-group', RbGroup);
customElements.define('rb-button', RbButton);
customElements.define('rb-small', RbSmall);
customElements.define('pbi-ribbon', PbiRibbon);
customElements.define('pbi-rail', PbiRail);
customElements.define('kpi-card', KpiCard);
customElements.define('bar-chart', BarChart);
customElements.define('pbi-canvas', PbiCanvas);
customElements.define('pbi-filters', PbiFilters);
customElements.define('well-box', WellBox);
customElements.define('pane-head', PaneHead);
customElements.define('viz-pane', VizPane);
customElements.define('field-row', FieldRow);
customElements.define('fields-pane', FieldsPane);
customElements.define('pbi-app', PbiApp);
</script>
</body>
</html>
